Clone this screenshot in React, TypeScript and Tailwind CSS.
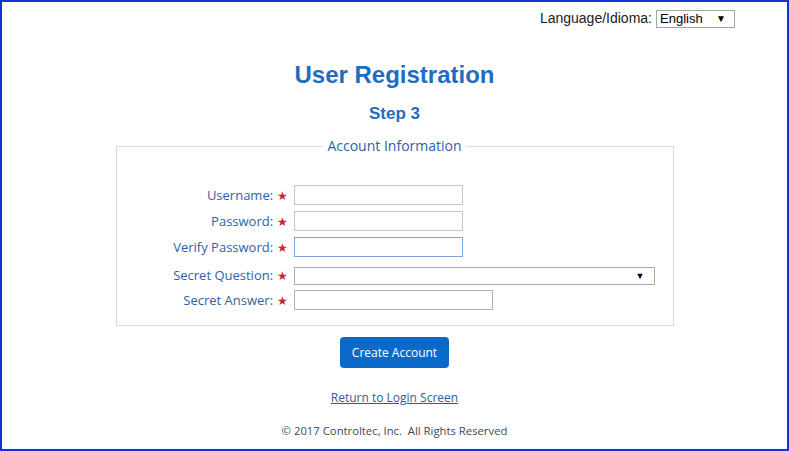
import React from "react";

const labelFont = { fontFamily: '"Open Sans", "Noto Sans", sans-serif' };
const arial = { fontFamily: '"Liberation Sans", Arial, sans-serif' };

const Field = ({
  label,
  className,
  children,
}: {
  label: string;
  className?: string;
  children: React.ReactNode;
}) => (
  <div className={`flex items-center ${className ?? ""}`}>
    <div className="w-[171px] text-right text-[13px] leading-[18px] text-[#2d62a6]">
      {label} <span className="text-[#c0282d] text-[12px]">★</span>
    </div>
    <div className="ml-[6px]">{children}</div>
  </div>
);

const App = () => {
  return (
    <div className="w-[789px] h-[451px] border-2 border-[#1a2fd6] bg-white overflow-hidden">
      <div
        className="flex justify-end items-center pt-[6px] pr-[52px] text-[14px] text-[#222]"
        style={arial}
      >
        <span className="mr-[4px]">Language/Idioma:</span>
        <div className="w-[79px] h-[18px] border border-[#a5a5a5] flex items-center justify-between pl-[3px] pr-[8px] text-[13px] leading-none text-black">
          <span>English</span>
          <span className="text-[10px]">▼</span>
        </div>
      </div>

      <h1
        className="mt-[32px] text-center text-[24px] leading-[28px] font-bold text-[#1f6cc0]"
        style={arial}
      >
        User Registration
      </h1>
      <h2
        className="mt-[15px] text-center text-[17px] leading-[20px] font-bold text-[#1f6cc0]"
        style={arial}
      >
        Step 3
      </h2>

      <fieldset
        className="mt-[13px] mx-auto w-[558px] border border-[#dcdcdc] pb-[15px]"
        style={labelFont}
      >
        <legend className="mx-auto px-[4px] text-[14px] leading-[18px] text-[#2d62a6]">
          Account Information
        </legend>
        <div className="pt-[30px]">
          <Field label="Username:">
            <div className="w-[169px] h-[20px] border border-[#c6c6c6]" />
          </Field>
          <Field label="Password:" className="mt-[6px]">
            <div className="w-[169px] h-[20px] border border-[#c6c6c6]" />
          </Field>
          <Field label="Verify Password:" className="mt-[6px]">
            <div className="w-[169px] h-[20px] border border-[#7ea6d8]" />
          </Field>
          <Field label="Secret Question:" className="mt-[9px]">
            <div className="w-[361px] h-[18px] border border-[#a9a9a9] flex items-center justify-end pr-[9px] text-[9px] text-black">
              ▼
            </div>
          </Field>
          <Field label="Secret Answer:" className="mt-[5px]">
            <div className="w-[199px] h-[20px] border border-[#b0b0b0]" />
          </Field>
        </div>
      </fieldset>

      <div className="flex flex-col items-center" style={labelFont}>
        <button className="mt-[11px] w-[109px] h-[31px] rounded-[4px] bg-[#0b69c9] text-white text-[12px]">
          Create Account
        </button>
        <a className="mt-[21px] text-[12px] leading-[18px] text-[#2d5aa6] underline cursor-pointer">
          Return to Login Screen
        </a>
        <p className="mt-[16px] text-[11.3px] leading-[16px] text-[#3a4a5c] whitespace-pre">
          © 2017 Controltec, Inc.  All Rights Reserved
        </p>
      </div>
    </div>
  );
};

export default App;
